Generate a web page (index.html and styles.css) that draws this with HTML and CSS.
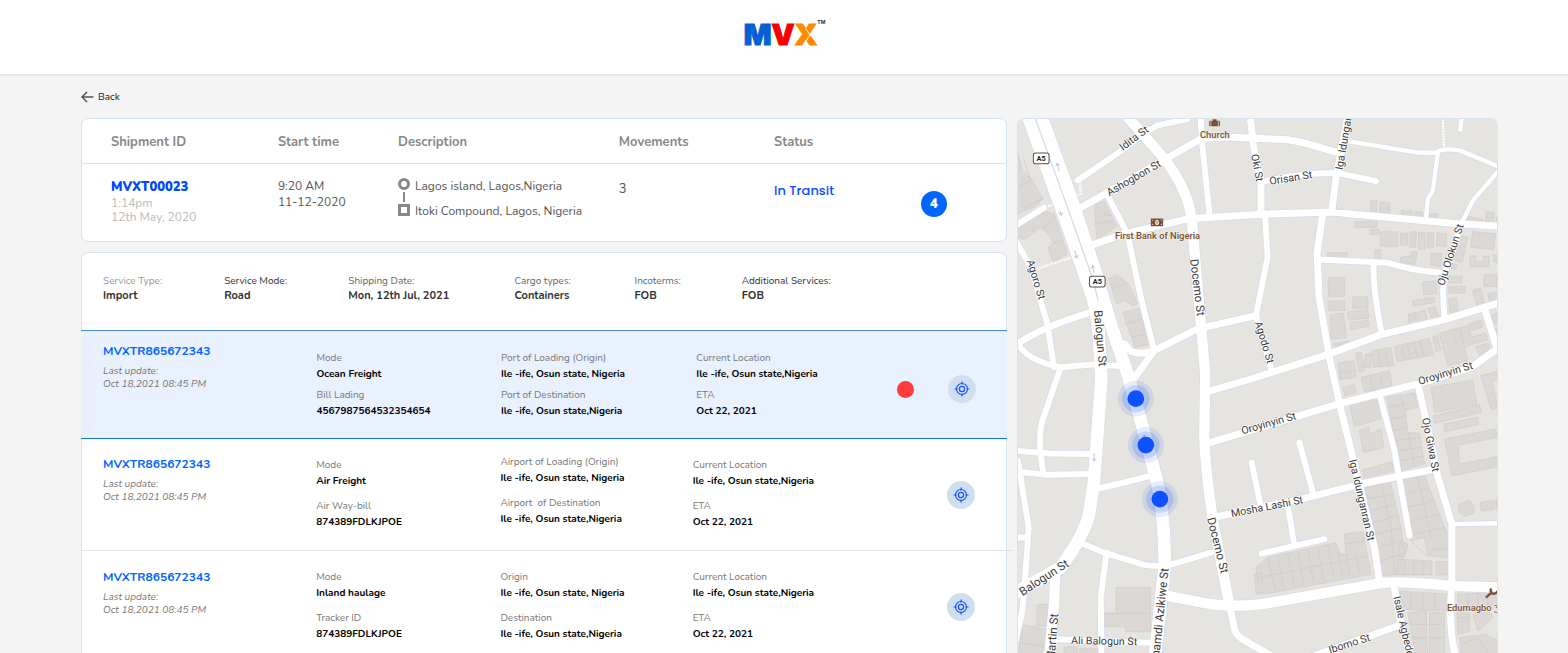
FILE: index.html
```html
<!DOCTYPE html>
<html lang="en">
<head>
<meta charset="utf-8">
<meta name="viewport" content="width=device-width, initial-scale=1">
<title>MVX Shipment tracking</title>
<link rel="stylesheet" href="styles.css">
</head>
<body>
<svg class="sprite" aria-hidden="true">
  <symbol id="target" viewBox="0 0 16 16"><circle cx="8" cy="8" r="5.5"/><circle cx="8" cy="8" r="2.6"/><path d="M8 .5v3M8 12.500v3M.5 8h3M12.500 8h3"/></symbol>
</svg>
<header class="topbar">
  <div class="logo"><span class="logo-m">M</span><span class="logo-v">V</span><span class="logo-x">X<svg class="logo-cut" viewBox="0 0 12 22" aria-hidden="true"><path d="M1 5 5 11 1 17M5 11 9 7M5 11l4 4"/></svg></span><sup class="logo-tm">TM</sup></div>
</header>
<main class="page">
  <a class="back" href="#"><svg class="back-icon" viewBox="0 0 13 12" aria-hidden="true"><path d="M12.500 6H1M6 1 1 6l5 5"/></svg>Back</a>
  <div class="columns">
    <div class="left">
      <section class="card">
        <table class="summary">
          <colgroup><col class="c-id"><col class="c-time"><col class="c-desc"><col class="c-moves"><col class="c-status"><col class="c-badge"></colgroup>
          <thead><tr><th>Shipment ID</th><th>Start time</th><th>Description</th><th>Movements</th><th>Status</th><th></th></tr></thead>
          <tbody><tr>
            <td><a class="ship-id" href="#">MVXT00023</a><div class="ship-date">1:14pm<br>12th May, 2020</div></td>
            <td class="start">9:20 AM<br>11-12-2020</td>
            <td><div class="route">
              <svg class="route-icon" viewBox="0 0 12 38" aria-hidden="true"><circle cx="6" cy="6" r="4.500"/><path class="route-line" d="M6 14v10"/><path d="M1.500 27.500h9v9h-9z"/></svg>
              <div class="route-text"><span>Lagos island, Lagos,Nigeria</span><span>Itoki Compound, Lagos, Nigeria</span></div>
            </div></td>
            <td class="moves">3</td>
            <td class="status">In Transit</td>
            <td class="badge-cell"><span class="badge">4</span></td>
          </tr></tbody>
        </table>
      </section>
      <section class="card details">
        <dl class="services">
          <div><dt class="soft">Service Type:</dt><dd>Import</dd></div>
          <div><dt class="strong">Service Mode:</dt><dd>Road</dd></div>
          <div><dt>Shipping Date:</dt><dd>Mon, 12th Jul, 2021</dd></div>
          <div><dt>Cargo types:</dt><dd>Containers</dd></div>
          <div><dt>Incoterms:</dt><dd>FOB</dd></div>
          <div><dt class="strong">Additional Services:</dt><dd>FOB</dd></div>
        </dl>
        <article class="move active">
          <div class="move-head"><a href="#">MVXTR865672343</a><p>Last update:<br>Oct 18,2021 08:45 PM</p></div>
          <dl><dt>Mode</dt><dd>Ocean Freight</dd><dt>Bill Lading</dt><dd>4567987564532354654</dd></dl>
          <dl><dt>Port of Loading (Origin)</dt><dd>Ile -ife, Osun state, Nigeria</dd><dt>Port of Destination</dt><dd>Ile -ife, Osun state,Nigeria</dd></dl>
          <dl><dt>Current Location</dt><dd>Ile -ife, Osun state,Nigeria</dd><dt>ETA</dt><dd>Oct 22, 2021</dd></dl>
          <span class="alert"></span>
          <button class="locate" type="button" aria-label="Locate shipment"><svg aria-hidden="true"><use href="#target"/></svg></button>
        </article>
        <article class="move second">
          <div class="move-head"><a href="#">MVXTR865672343</a><p>Last update:<br>Oct 18,2021 08:45 PM</p></div>
          <dl><dt>Mode</dt><dd>Air Freight</dd><dt>Air Way-bill</dt><dd>874389FDLKJPOE</dd></dl>
          <dl class="raised"><dt>Airport of Loading (Origin)</dt><dd>Ile -ife, Osun state, Nigeria</dd><dt>Airport&nbsp; of Destination</dt><dd>Ile -ife, Osun state,Nigeria</dd></dl>
          <dl><dt>Current Location</dt><dd>Ile -ife, Osun state,Nigeria</dd><dt>ETA</dt><dd>Oct 22, 2021</dd></dl>
          <span></span>
          <button class="locate" type="button" aria-label="Locate shipment"><svg aria-hidden="true"><use href="#target"/></svg></button>
        </article>
        <article class="move third">
          <div class="move-head"><a href="#">MVXTR865672343</a><p>Last update:<br>Oct 18,2021 08:45 PM</p></div>
          <dl><dt>Mode</dt><dd>Inland haulage</dd><dt>Tracker ID</dt><dd>874389FDLKJPOE</dd></dl>
          <dl><dt>Origin</dt><dd>Ile -ife, Osun state, Nigeria</dd><dt>Destination</dt><dd>Ile -ife, Osun state,Nigeria</dd></dl>
          <dl><dt>Current Location</dt><dd>Ile -ife, Osun state,Nigeria</dd><dt>ETA</dt><dd>Oct 22, 2021</dd></dl>
          <span></span>
          <button class="locate" type="button" aria-label="Locate shipment"><svg aria-hidden="true"><use href="#target"/></svg></button>
        </article>
      </section>
    </div>
    <section class="map" aria-label="Shipment map">
      <svg viewBox="22 26 1441 1603" preserveAspectRatio="xMinYMin slice" role="img">
        <defs>
          <path id="r38" d="M53 20 165 330 242 550Q262 610 265 690L272 800 250 1110 235 1210Q222 1270 150 1370L15 1445M92 20 180 260 250 470 300 640 350 790 385 910 430 1080Q460 1180 462 1360L432 1640"/>
          <path id="r31" d="M350 20 430 110Q530 220 543 330L568 620 583 790 580 980Q585 1100 610 1250L655 1480 M134 1380 130 1480 115 1640M470 1455 600 1480Q700 1490 780 1475L1100 1418Q1160 1408 1320 1425L1470 1430"/>
          <path id="r21" d="M655 1480 670 1550Q672 1570 695 1585L790 1640M205 295 300 240 570 85 640 80 830 88Q880 95 990 130M718 20 728 110 750 210V310M235 407 340 370 530 325 740 312 960 305 1340 340 1470 347M22 700Q80 655 240 605M342 700 360 722Q390 735 430 720L560 655 735 615M430 720 365 810M600 840 720 805 940 735 1110 672 1300 627 1470 575M600 995 980 880 1220 820 1380 770 1458 715 1420 595M1010 20 975 200 962 305M935 310 918 430 924 560 955 740 988 890 1030 1060 1090 1310 1105 1410M1148 1420 1170 1540 1198 1640M1165 1543 900 1638M1220 820 1265 1020 1275 1080 1322 1240V1420Q1310 1560 1335 1640M615 1218 750 1190 870 1165 1070 1115 1270 1075"/>
          <path id="r18" d="M200 210 340 115Q400 65 440 45L530 26M569 20 575 110 596 315M290 255 350 370 390 560 430 720M735 615 770 440 762 310M735 615 783 785M15 345 100 292M15 390 60 470 110 640 130 770M22 700Q50 750 150 770L260 760Q270 765 340 765M150 770 95 930Q80 980 97 1080M15 1020 120 1028 240 1030M15 1082 110 1092 240 1090M22 1050Q40 1160 54 1250 45 1390 35 1500L15 1590M15 1280H50M250 1136 340 1115 420 1095M220 1300 280 1325 400 1362Q450 1370 490 1358L600 1325M287 1325 270 1460 272 1640M140 1585 300 1592 430 1595M750 215Q880 185 980 188L1095 212M1350 340 1300 490Q1292 540 1300 620M920 447 1130 457Q1200 480 1290 487M1088 460Q1083 520 1112 670M1105 850 1150 1020 1195 1275M865 995 907 1150M722 1055 750 1190M830 1180 850 1305M752 1328 940 1285"/>
          <path id="r13" d="M1010 92 1220 127H1275Q1290 112 1345 120L1470 172 1385 270 1350 340M1280 127 1265 240 1250 265 1245 320M1352 20 1347 58M1322 1240 1470 1237"/>
        </defs>
        <rect class="land" x="0" y="0" width="3000" height="3000"/>
        <g class="buildings">
          <path d="M20 125 35 180 62 205 97 265 72 290 20 310ZM20 350 100 300 130 310 170 430 128 455 112 412 130 400 115 372 90 350 40 388 20 380Z"/>
          <path d="M250 283 280 272 318 348 258 388ZM293 505 320 492 350 518 353 520 380 580 368 586 340 570 318 580ZM336 605 392 592 402 672 362 680ZM362 680 404 672 412 702 372 712Z"/>
          <path d="M1078 270h20l-2 34h-18ZM1108 274l28 2-2 33-30-2ZM1033 334l64-2v18l-64 2ZM1078 357h25v15h-25ZM1108 364h52v43h-52ZM1168 368h22v36h-22ZM1198 364h18l-2 46h-18ZM1222 366h19v50h-19ZM1248 366h19v46h-19ZM1278 366l28 4-2 38-28-3ZM1170 300h12v17h-12ZM1188 301h14v17h-14ZM1210 304h22v17h-22ZM1255 310h22v17h-22ZM948 427h62v14h-62ZM1092 418h17v27h-17ZM1168 440l34-4v-12h16l-5 38-45-7ZM1260 427l32 3-4 38-30-4ZM1342 375l28 5-17 75-30-8ZM1384 363l68 7-5 48-68-8ZM1376 436h18v18h22v-16h18v31h-58ZM1370 318l45 10-3 10-45-5ZM1425 303l24 4-4 30-22-4ZM1455 320h10v20h-10ZM1446 433h20v20h-20Z"/>
          <path d="M952 502h49v55h-49ZM952 571h49v28h-49ZM957 612l40-5 9 74-46 5ZM1025 559h45v34h-45ZM1010 604l60-6 4 24-62 7ZM1018 637l54-9 3 18-56 12ZM965 700l48-9-38 18ZM1234 515l40-4 3 38-40 4ZM1203 570l65-10 3 16-65 11ZM1192 610l22-5-1 25-22 5ZM1216 606l25-8 8 30-30 8ZM1250 593l20-6 14 30-22 8ZM1310 497h42v20h-42ZM1310 529l52-2v20l-48 1ZM1312 565l24-4 5 45-24 7ZM1384 540l25-8 9 42-22 9ZM1418 493h38v35h-38ZM1430 550l33-6v25l-28 8ZM1322 459l15 3-3 15-15-3Z"/>
          <path d="M982 757 1030 751 1034 797 986 804ZM1033 728 1050 724 1060 780 1044 785ZM1062 732 1080 728 1078 772 1060 770ZM1082 720 1140 710 1148 765 1086 770ZM1150 708 1255 683 1268 732 1158 753ZM1265 680 1278 674 1290 718 1274 725ZM1284 668 1372 645 1386 700 1360 710 1370 750 1310 765ZM1374 640 1410 628 1414 650 1382 660ZM1384 678 1422 668 1430 688 1390 698ZM1392 708 1430 698 1442 720 1408 740ZM1440 615 1465 606V635L1446 640ZM1450 655 1465 650V685Z"/>
          <path d="M1015 880 1100 862 1108 925 1030 948ZM1050 800 1135 780 1142 825 1060 845ZM996 830 1030 822 1035 845 1000 856ZM985 786 1034 780V800L990 806ZM1044 960 1072 948 1076 970 1110 955 1118 1010 1058 1025ZM1126 860 1210 846 1220 890 1182 900 1190 965 1225 968 1240 1060 1172 1078ZM1052 1078 1100 1066 1105 1090 1058 1102ZM1104 1062 1142 1055 1146 1080 1108 1090Z"/>
          <path fill-rule="evenodd" d="M1260 830 1385 808 1397 880 1270 905ZM1267 915 1405 882 1410 905 1270 938ZM1298 940 1400 920V942L1300 963ZM1300 985 1452 955 1460 980 1340 1003 1346 1060 1470 1035V1066L1322 1095ZM1408 795 1470 780V800L1442 812 1460 890 1440 898ZM1345 1180 1372 1168 1388 1185 1390 1205 1365 1217 1342 1205ZM1406 1175 1450 1168V1195L1410 1200ZM1455 1170h12v22h-12Z"/>
          <path d="M1062 1130 1138 1115 1170 1250 1180 1330 1160 1390 1118 1395ZM1168 1108 1240 1095 1308 1270V1340L1250 1335 1240 1280 1200 1290ZM1160 1345 1262 1350V1392H1155ZM1275 1352h33v40h-33ZM1170 1290 1190 1300 1180 1340 1158 1335Z"/>
          <path d="M735 1370 770 1340 975 1295 985 1325 1005 1335 1000 1270 1055 1262 1080 1390 760 1450 745 1445ZM730 1390 752 1385 755 1448 736 1450Z"/>
          <path d="M1165 1440 1305 1450V1500L1180 1495ZM1190 1505 1245 1500 1250 1640H1215ZM1255 1505h45v135h-45ZM1340 1450 1460 1445V1480L1340 1495ZM1337 1500 1375 1495V1560L1340 1570ZM1385 1510 1430 1490 1445 1520 1400 1560ZM1345 1580 1420 1570 1463 1590V1640H1350Z"/>
          <path d="M316 1430h103v132h-75v-15h-62v-40h34ZM80 1480h36v65H78ZM35 1542 108 1555 105 1640H22ZM160 1608h40v30h-40ZM207 1613h60v30h-60Z"/>
        </g>
        <g class="lots">
          <path d="M40 150 60 210 25 230M97 265 45 290M60 350 72 370M128 325 100 350M120 400 155 390M275 310 300 315M260 340 310 330M305 535 348 520M336 640 400 625"/>
          <path d="M1102 716l8 52M1122 713l8 52M1170 704l10 44M1188 699l10 45M1206 695l12 44M1226 690l11 44M1326 655l12 48M1346 650l12 55M1078 796l8 42M1106 790l8 42M1166 852l14 44M1130 890 1180 880M1138 925 1185 915M1145 960 1190 950M1150 990 1228 980M1158 1020 1232 1010M1165 1050 1238 1035M1190 966l20 100"/>
          <path d="M1068 1165 1145 1150M1076 1200 1152 1180M1085 1235 1160 1215M1094 1270 1168 1250M1102 1310 1175 1290M1110 1350 1172 1330M1110 1120 1140 1250 1150 1390M1175 1150 1255 1130M1185 1190 1270 1170M1195 1230 1288 1210M1210 1270 1300 1250M1220 1100 1260 1280M1180 1345v48M1208 1347v46M1234 1348v45M1200 1290l50 50M1255 1315h52"/>
          <path d="M800 1335l20 105M830 1328l20 100M860 1322l18 100M890 1316l18 98M920 1310l18 98M950 1303l18 98M980 1320l15 76M1005 1335l10 56M1035 1330l10 55M745 1400 1070 1335M1005 1300 1060 1290M770 1340l25 100"/>
          <path d="M1200 1445v50M1235 1448v48M1270 1448v50M1195 1540h54M1200 1580h48M1255 1540h45M1255 1580h45M1370 1450v40M1400 1448v38M1430 1447v36M1340 1520h35M1350 1600 1400 1580 1440 1640M282 1507h135M30 1595l76 12"/>
        </g>
        <g class="paths"><path d="M208 215 210 250 112 288"/><path d="M70 478 185 440"/><path d="M1295 28 1298 112"/></g>
        <g class="casing"><use class="w18" href="#r18"/><use class="w13" href="#r13"/><use class="w21" href="#r21"/><use class="w31" href="#r31"/><use class="w38" href="#r38"/></g>
        <g class="road"><use class="w18" href="#r18"/><use class="w13" href="#r13"/><use class="w21" href="#r21"/><use class="w31" href="#r31"/><use class="w38" href="#r38"/></g>
        <path class="median" d="M72 20 170 290 248 510 262 570"/>
        <g class="arrows"><path d="M145 182 139 160m-4 8 4-9 8 6M152 315l-4-14m-4 5 8 8 4-9M192 420l6 22m-8-5 8 6 4-9M250 488l-5-22m-4 8 4-9 8 6M250 1028v22m-5-7 5 8 5-8M403 985l-3-12m-4 6 4-7 5 5"/></g>
        <g class="streets">
          <text transform="translate(376 92) rotate(-37)">Idita St</text>
          <text transform="translate(374 212) rotate(-30)">Ashogbon St</text>
          <text transform="translate(66 510) rotate(73)">Agoro St</text>
          <text class="big" transform="translate(257 684) rotate(85)">Balogun St</text>
          <text class="big" transform="translate(548 532) rotate(83)">Docemo St</text>
          <text transform="translate(728 174) rotate(79)">Oki St</text>
          <text transform="translate(841 213) rotate(-9)">Orisan St</text>
          <text transform="translate(1008 101) rotate(-80)">Iga Idungar</text>
          <text transform="translate(1328 436) rotate(-72)">Oju Olokun St</text>
          <text transform="translate(750 698) rotate(73)">Agodo St</text>
          <text transform="translate(1306 798) rotate(-17)">Oroyinyin St</text>
          <text transform="translate(776 948) rotate(-16)">Oroyinyin St</text>
          <text transform="translate(1248 1004) rotate(79)">Ojo Giwa St</text>
          <text transform="translate(1042 1170) rotate(77)">Iga Idunganran St</text>
          <text transform="translate(770 1198) rotate(-11)">Mosha Lashi St</text>
          <text class="big" transform="translate(609 1306) rotate(76)">Docemo St</text>
          <text class="big" transform="translate(106 1410) rotate(-33)">Balogun St</text>
          <text class="big" transform="translate(458 1518) rotate(-84)">Nnamdi Azikiwe St</text>
          <text class="big" transform="translate(137 1580) rotate(-85)">Martin St</text>
          <text transform="translate(280 1601) rotate(1)">Ali Balogun St</text>
          <text transform="translate(1018 1608) rotate(-18)">Ibomo St</text>
          <text transform="translate(1167 1548) rotate(77)">Isale Agbede</text>
        </g>
        <g class="shields">
          <rect x="68" y="128" width="47" height="32" rx="7"/><text x="91" y="151">A5</text>
          <rect x="236" y="497" width="47" height="32" rx="7"/><text x="260" y="520">A5</text>
        </g>
        <g class="places">
          <path d="M595 31h4v17h-4ZM623 31h4v17h-4ZM601 31h4v-4h12v4h4v17h-20Z"/>
          <path fill-rule="evenodd" d="M420 324h37v23h-37ZM424 328v4l4-4ZM424 343v-4l4 4ZM453 328v4l-4-4ZM453 343v-4l-4 4ZM438 328a6 8 0 1 0 1 0ZM437 332h3v8h-3Z"/>
          <path class="wrench" d="M1424 1460 1444 1442M1440 1433Q1434 1446 1447 1449 1456 1448 1459 1440"/>
          <text x="612" y="83">Church</text>
          <text x="440" y="385">First Bank of Nigeria</text>
          <text x="1386" y="1501">Edumagbo <tspan>Ʒ</tspan></text>
        </g>
        <g class="pins">
          <g><circle class="halo" cx="375" cy="864" r="54"/><circle class="halo inner" cx="375" cy="864" r="41"/><circle cx="375" cy="864" r="25"/></g>
          <g><circle class="halo" cx="405" cy="1003" r="54"/><circle class="halo inner" cx="405" cy="1003" r="41"/><circle cx="405" cy="1003" r="25"/></g>
          <g><circle class="halo" cx="447" cy="1165" r="54"/><circle class="halo inner" cx="447" cy="1165" r="41"/><circle cx="447" cy="1165" r="25"/></g>
        </g>
      </svg>
    </section>
  </div>
</main>
</body>
</html>
```
FILE: styles.css
```css
* { box-sizing: border-box; }
body { margin: 0; background: #f4f4f4; color: #333; font: 13px/16px Nunito, Lato, "Open Sans", sans-serif; }
a { color: inherit; text-decoration: none; }
dl, dd, p { margin: 0; }
.sprite { display: block; width: 0; height: 0; }

.topbar { display: flex; justify-content: center; align-items: flex-start; height: 75px; padding: 17px 7px 0 0; background: #fff; border-bottom: 1px solid #e2e6ea; box-shadow: 0 1px 1px #e8eaec; }
.logo { position: relative; display: flex; font: 900 29px/36px Inter, sans-serif; -webkit-text-stroke: 1px currentColor; }
.logo-m { color: #0560d2; }
.logo-v { color: #f80000; }
.logo-x { position: relative; color: #ff8a00; }
.logo-cut { position: absolute; right: 0; top: 7px; width: 12px; height: 22px; fill: none; stroke: #fff; stroke-width: 1; }
.logo-tm { position: absolute; left: 100%; top: 1px; margin: 0; color: #28323c; font: 700 5px/8px Inter, sans-serif; -webkit-text-stroke: 0; }

.page { padding: 0 70px 0 81px; }
.back { display: inline-flex; align-items: center; gap: 4px; height: 43px; color: #222; font-size: 10px; }
.back-icon { width: 13px; height: 12px; fill: none; stroke: #555; stroke-width: 1.500; }
.columns { display: grid; grid-template-columns: minmax(0, 926fr) minmax(0, 481fr); gap: 10px; }
.left { display: flex; flex-direction: column; gap: 10px; min-width: 0; }
.card { background: #fff; border: 1px solid #d5e4f0; border-radius: 7px; }

.summary { width: 100%; table-layout: fixed; border-collapse: collapse; text-align: left; color: #555; }
.c-id { width: 21.2%; }
.c-time { width: 13%; }
.c-desc { width: 23.9%; }
.c-moves { width: 16.8%; }
.c-status { width: 15.9%; }
.summary th { height: 44px; padding: 3px 0 0; border-bottom: 1px solid #d5e4f0; color: #888; font-size: 13px; font-weight: 700; }
.summary td { height: 78px; padding: 14px 0 0; vertical-align: top; }
.summary th:first-child, .summary td:first-child { padding-left: 29px; }
.ship-id { display: block; color: #0048ff; font-size: 13px; line-height: 18px; font-weight: 900; }
.ship-date { color: #bbb; font-size: 12px; line-height: 14px; }
.start, .route-text { font-size: 12px; }
.route { display: flex; gap: 5px; }
.route-icon { width: 12px; height: 38px; fill: none; stroke: #888; stroke-width: 3; }
.route-line { stroke-width: 2; }
.route-text { display: flex; flex-direction: column; gap: 9px; white-space: nowrap; }
.summary .moves { padding-top: 17px; font-size: 13px; }
.summary .status { padding-top: 18px; color: #0c4dff; font: 500 13px/18px Poppins, Inter, sans-serif; }
.summary .badge-cell { padding-top: 27px; }
.badge { display: flex; justify-content: center; align-items: center; width: 26px; height: 26px; border-radius: 50%; background: #0066ff; color: #fff; font-size: 13px; font-weight: 900; }

.details { flex: 1; border-bottom: 0; border-radius: 7px 7px 0 0; }
.services { display: grid; grid-template-columns: 121fr 124fr 166fr 120fr 107fr 264fr; height: 77px; padding: 21px 0 0 21px; }
.services dt { font-size: 10px; line-height: 14px; color: #666; }
.services .soft { color: #999; }
.services .strong { color: #333; }
.services dd { font-size: 11px; line-height: 15px; font-weight: 700; }

.move { position: relative; display: grid; grid-template-columns: 213fr 184fr 192fr 203fr 51fr 59fr; padding-left: 21px; height: 112px; font-size: 10px; line-height: 16px; }
.move.active { grid-template-columns: 213fr 184fr 195fr 200fr 51fr 59fr; margin: 0 -1px; padding-left: 22px; height: 109px; background: #e9f1ff; border-top: 1px solid #4a90e2; border-bottom: 1px solid #1a75dd; }
.move.second::after { content: ""; position: absolute; left: 0; right: -8px; bottom: 0; height: 1px; background: #e2e2e2; }
.move.third { height: 103px; }
.move-head { padding-top: 16px; }
.active .move-head { padding-top: 11px; }
.third .move-head { padding-top: 17px; }
.move-head a { display: block; color: #0066ff; font-size: 12px; line-height: 18px; font-weight: 700; }
.move-head p { margin-top: 5px; color: #777; font-size: 10px; line-height: 13px; font-style: italic; }
.move dl { padding-top: 18px; }
.active dl { padding-top: 19px; }
.move .raised { padding-top: 15px; }
.move dt { color: #777; }
.move dd { color: #000; font-weight: 700; }
.move dd + dt { margin-top: 9px; }
.active dd + dt { margin-top: 5px; }
.alert { align-self: center; width: 17px; height: 17px; margin-top: 10px; border-radius: 50%; background: #ff3b3b; }
.locate { align-self: center; display: flex; justify-content: center; align-items: center; width: 28px; height: 28px; margin-top: 8px; padding: 0; border: 0; border-radius: 50%; background: #cfdfef; cursor: pointer; }
.second .locate { margin-top: 0; }
.locate svg { width: 16px; height: 16px; fill: none; stroke: #1455ff; stroke-width: 1.200; }

.map { overflow: hidden; border: 1px solid #d5e4f0; border-bottom: 0; border-radius: 7px 7px 0 0; }
.map > svg { display: block; width: 100%; height: 100%; }
.land { fill: #e5e4e0; }
.buildings { fill: #dcd8d5; stroke: #d0ccc9; stroke-width: 2; }
.lots { fill: none; stroke: #cdc9c6; stroke-width: 2; }
.casing, .road { fill: none; stroke-linecap: round; stroke-linejoin: round; }
.road { stroke: #fff; }
.casing { stroke: #d6d9ea; }
.road .w13 { stroke-width: 13; }
.road .w18 { stroke-width: 18; }
.road .w21 { stroke-width: 21; }
.road .w31 { stroke-width: 31; }
.road .w38 { stroke-width: 38; }
.casing .w13 { stroke-width: 17; }
.casing .w18 { stroke-width: 22; }
.casing .w21 { stroke-width: 25; }
.casing .w31 { stroke-width: 35; }
.casing .w38 { stroke-width: 42; }
.paths { fill: none; stroke: #fff; stroke-width: 7; stroke-dasharray: 5 3; }
.median { fill: none; stroke: #d6d9ea; stroke-width: 4; }
.arrows { fill: none; stroke: #a3a8c4; stroke-width: 2; }
.streets text { fill: #3a3a3a; stroke: #fff; stroke-width: 4; paint-order: stroke; font: 32px Roboto, sans-serif; text-anchor: middle; }
.streets .big { font-size: 35px; }
.shields rect { fill: #fff; stroke: #555; stroke-width: 3; }
.shields text { fill: #222; font: 700 22px Roboto, sans-serif; text-anchor: middle; }
.places { fill: #7b5238; }
.places .wrench { fill: none; stroke: #7b5238; stroke-width: 7; }
.places text { stroke: #f0efec; stroke-width: 4; paint-order: stroke; font: 500 28px Roboto, sans-serif; text-anchor: middle; }
.pins { fill: #1051ff; }
.halo { fill-opacity: .1; }
.halo.inner { fill-opacity: .17; }
```
